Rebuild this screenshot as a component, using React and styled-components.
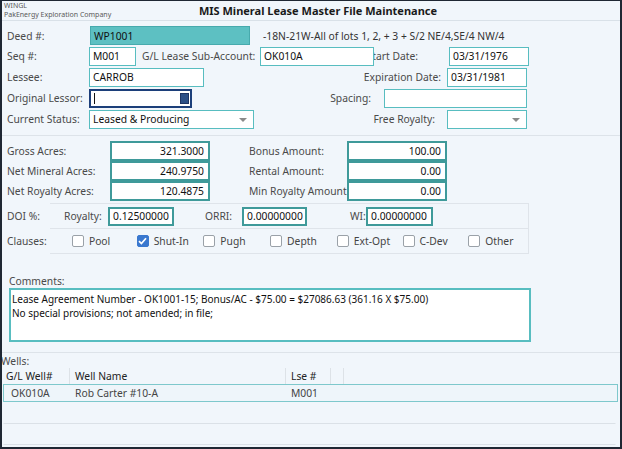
import React from "react"
import styled, { createGlobalStyle } from "styled-components"

const GlobalStyle = createGlobalStyle`
  html, body {
    margin: 0;
    padding: 0;
    background: #f1f6fb;
  }
  * {
    box-sizing: border-box;
  }
`

const TEAL = "#58bdc0"
const TEAL_DARK = "#3f9a9a"
const LABEL = "#4a4a4a"

const Window = styled.div`
  width: 622px;
  height: 449px;
  border: 2px solid #1f2733;
  border-top-width: 1px;
  background: #f1f6fb;
  font-family: "Noto Sans", "Open Sans", sans-serif;
  font-size: 10.3px;
  line-height: 14px;
  color: #1a1a1a;
  overflow: hidden;
  display: flex;
  flex-direction: column;
`

const Header = styled.div`
  height: 20px;
  flex-shrink: 0;
  position: relative;
  display: flex;
  align-items: center;
  justify-content: center;
  border-bottom: 1px solid #d9e1e8;
`

const Company = styled.div`
  position: absolute;
  left: 2px;
  top: 0;
  font-size: 7px;
  line-height: 9px;
  color: #5a5a5a;
`

const Title = styled.div`
  font-weight: 700;
  font-size: 11px;
  margin-left: 14px;
`

const Section = styled.div`
  flex-shrink: 0;
  padding: ${(p) => p.$pad || "0 0 0 5px"};
  border-bottom: ${(p) => (p.$line ? "1px solid #dde3e9" : "none")};
  display: flex;
  flex-direction: column;
  gap: ${(p) => p.$gap || 0}px;
`

const Row = styled.div`
  display: flex;
  align-items: center;
  height: ${(p) => p.$h || 20}px;
`

const Label = styled.span`
  color: ${LABEL};
  width: ${(p) => (p.$w ? `${p.$w}px` : "auto")};
  margin-left: ${(p) => p.$ml || 0}px;
  line-height: ${(p) => p.$lh || 14}px;
  white-space: nowrap;
  flex-shrink: 0;
`

const ClipLabel = styled.span`
  color: ${LABEL};
  width: ${(p) => p.$w}px;
  overflow: hidden;
  display: flex;
  justify-content: flex-end;
  white-space: nowrap;
  flex-shrink: 0;
`

const RightLabel = styled.span`
  color: ${LABEL};
  width: ${(p) => p.$w}px;
  text-align: right;
  white-space: nowrap;
  flex-shrink: 0;
  padding-right: ${(p) => p.$pr || 0}px;
`

const Field = styled.div`
  width: ${(p) => p.$w}px;
  height: ${(p) => p.$h || 19}px;
  margin-left: ${(p) => p.$ml || 0}px;
  margin-right: ${(p) => p.$mr || 0}px;
  border: ${(p) => (p.$thick || p.$navy ? 2 : 1)}px solid
    ${(p) => (p.$navy ? "#1c3f7a" : p.$thick ? TEAL_DARK : p.$fill ? "#47aaad" : TEAL)};
  background: ${(p) => (p.$fill ? "#5dc0c2" : "#fff")};
  display: flex;
  align-items: center;
  justify-content: ${(p) => (p.$right ? "flex-end" : "flex-start")};
  padding: 0 4px 0 3px;
  color: #111;
  white-space: nowrap;
  flex-shrink: 0;
  position: relative;
`

const Caret = styled.span`
  position: absolute;
  right: 6px;
  top: 7px;
  width: 0;
  height: 0;
  border-left: 4px solid transparent;
  border-right: 4px solid transparent;
  border-top: 4px solid #8a8a8a;
`

const TextCursor = styled.span`
  width: 1px;
  height: 11px;
  background: #111;
`

const LookupBtn = styled.span`
  position: absolute;
  right: 1px;
  top: 2px;
  width: 9px;
  height: 11px;
  background: #2b4f86;
  border: 1px solid #1c3463;
`

const Spacer = styled.div`
  flex: 1;
`

const LegalText = styled.span`
  color: #333;
  margin-left: 13px;
  white-space: nowrap;
`

const Panel = styled.div`
  margin-left: 43px;
  width: 479px;
  border-top: 1px solid #dfe4ea;
  border-right: 1px solid #dfe4ea;
  border-bottom: 1px solid #dfe4ea;
`

const PanelRow = styled.div`
  position: relative;
  display: flex;
  align-items: center;
  height: ${(p) => p.$h}px;
  border-bottom: ${(p) => (p.$line ? "1px solid #dfe4ea" : "none")};
`

const SideLabel = styled.span`
  color: ${LABEL};
  position: absolute;
  left: -43px;
`

const Check = styled.span`
  width: 12px;
  height: 12px;
  border-radius: 2px;
  border: 1px solid ${(p) => (p.$on ? "#3a78cf" : "#9aa1a8")};
  background: ${(p) => (p.$on ? "#3a78cf" : "#fff")};
  display: inline-flex;
  align-items: center;
  justify-content: center;
  margin-right: 5px;
`

const CheckItem = styled.span`
  display: flex;
  align-items: center;
  width: ${(p) => p.$w}px;
  color: #444;
`

const TextArea = styled.div`
  width: 522px;
  height: 54px;
  border: 2px solid ${TEAL};
  background: #fff;
  padding: 2px 1px;
  line-height: 14px;
  font-size: 10px;
  color: #111;
`

const Table = styled.div`
  margin: 0 2px 0 1px;
  flex: 1;
  display: flex;
  flex-direction: column;
`

const HeadRow = styled.div`
  display: flex;
  height: 16px;
  align-items: center;
`

const HeadCell = styled.div`
  width: ${(p) => p.$w}px;
  padding-left: ${(p) => p.$pl || 3}px;
  border-right: ${(p) => (p.$sep ? "1px solid #dde2e7" : "none")};
  height: 100%;
  display: flex;
  align-items: center;
  color: #222;
  flex-shrink: 0;
`

const DataRow = styled.div`
  display: flex;
  flex-shrink: 0;
  height: ${(p) => p.$h || 18}px;
  align-items: center;
  border: 1px solid ${(p) => (p.$sel ? "#7ec8cc" : "transparent")};
  border-bottom: 1px solid ${(p) => (p.$sel ? "#7ec8cc" : "#dbe1e7")};
  background: ${(p) => (p.$sel ? "#eef5fa" : "transparent")};
  margin-right: ${(p) => (p.$sel ? 0 : 2)}px;
`

const Cell = styled.div`
  width: ${(p) => p.$w}px;
  padding-left: ${(p) => p.$pl || 0}px;
  color: #444;
  flex-shrink: 0;
`

const checks = [
  ["Pool", false, 65],
  ["Shut-In", true, 67],
  ["Pugh", false, 67],
  ["Depth", false, 67],
  ["Ext-Opt", false, 66],
  ["C-Dev", false, 66],
  ["Other", false, 60],
]

const acres = [
  ["Gross Acres:", "321.3000", "Bonus Amount:", "100.00"],
  ["Net Mineral Acres:", "240.9750", "Rental Amount:", "0.00"],
  ["Net Royalty Acres:", "120.4875", "Min Royalty Amount:", "0.00"],
]

export default function App() {
  return (
    <>
      <GlobalStyle />
      <Window>
        <Header>
          <Company>
            WINGL
            <br />
            PakEnergy Exploration Company
          </Company>
          <Title>MIS Mineral Lease Master File Maintenance</Title>
        </Header>

        <Section $line $pad="5px 0 6px 5px" $gap={1}>
          <Row $h={19}>
            <Label $w={83}>Deed #:</Label>
            <Field $w={160} $fill>WP1001</Field>
            <LegalText>-18N-21W-All of lots 1, 2, + 3 + S/2 NE/4,SE/4 NW/4</LegalText>
          </Row>
          <Row>
            <Label $w={82}>Seq #:</Label>
            <Field $w={47}>M001</Field>
            <Label $ml={6} $w={118}>G/L Lease Sub-Account:</Label>
            <Field $w={114}>OK010A</Field>
            <ClipLabel $w={44}>Start Date:</ClipLabel>
            <Field $w={80} $ml={31}>03/31/1976</Field>
          </Row>
          <Row>
            <Label $w={82}>Lessee:</Label>
            <Field $w={115}>CARROB</Field>
            <Spacer />
            <RightLabel $w={100} $pr={6}>Expiration Date:</RightLabel>
            <Field $w={80} $mr={93}>03/31/1981</Field>
          </Row>
          <Row>
            <Label $w={82}>Original Lessor:</Label>
            <Field $w={103} $navy>
              <TextCursor />
              <LookupBtn />
            </Field>
            <Spacer />
            <RightLabel $w={60} $pr={13}>Spacing:</RightLabel>
            <Field $w={143} $mr={93} />
          </Row>
          <Row>
            <Label $w={82}>Current Status:</Label>
            <Field $w={165}>
              Leased &amp; Producing
              <Caret />
            </Field>
            <Spacer />
            <RightLabel $w={100} $pr={12}>Free Royalty:</RightLabel>
            <Field $w={80} $mr={93}>
              <Caret />
            </Field>
          </Row>
        </Section>

        <Section $pad="5px 0 0 5px">
          {acres.map(([a, av, b, bv]) => (
            <Row key={a}>
              <Label $w={103}>{a}</Label>
              <Field $w={100} $h={20} $thick $right>
                {av}
              </Field>
              <Label $ml={39} $w={98}>{b}</Label>
              <Field $w={100} $h={20} $thick $right>
                {bv}
              </Field>
            </Row>
          ))}
          <div style={{ marginTop: 2 }}>
            <Panel>
              <PanelRow $h={25} $line>
                <SideLabel>DOI %:</SideLabel>
                <Label $ml={14} $w={44}>Royalty:</Label>
                <Field $w={66} $thick>0.12500000</Field>
                <Label $ml={31} $w={37}>ORRI:</Label>
                <Field $w={65} $thick>0.00000000</Field>
                <Label $ml={43} $w={16}>WI:</Label>
                <Field $w={67} $thick>0.00000000</Field>
              </PanelRow>
              <PanelRow $h={24}>
                <SideLabel>Clauses:</SideLabel>
                <span style={{ width: 22 }} />
                {checks.map(([t, on, w]) => (
                  <CheckItem key={t} $w={w}>
                    <Check $on={on}>
                      {on && (
                        <svg width="9" height="8" viewBox="0 0 9 8">
                          <path d="M1 4.2 L3.4 6.5 L8 1.3" stroke="#fff" strokeWidth="1.7" fill="none" />
                        </svg>
                      )}
                    </Check>
                    {t}
                  </CheckItem>
                ))}
              </PanelRow>
            </Panel>
          </div>
        </Section>

        <Section $line $pad="21px 0 10px 7px">
          <Label $lh={13}>Comments:</Label>
          <TextArea>
            Lease Agreement Number - OK1001-15; Bonus/AC - $75.00 = $27086.63 (361.16 X $75.00)
            <br />
            No special provisions; not amended; in file;
          </TextArea>
        </Section>

        <Section $pad="2px 0 0 0">
          <Label $lh={13} style={{ marginLeft: -1 }}>Wells:</Label>
        </Section>
        <Table>
          <HeadRow>
            <HeadCell $w={67} $sep>G/L Well#</HeadCell>
            <HeadCell $w={216} $sep $pl={5}>Well Name</HeadCell>
            <HeadCell $w={45} $sep $pl={5}>Lse #</HeadCell>
            <HeadCell $w={13} $sep />
          </HeadRow>
          <DataRow $sel>
            <Cell $w={68} $pl={7}>OK010A</Cell>
            <Cell $w={216} $pl={3}>Rob Carter #10-A</Cell>
            <Cell $w={50} $pl={3}>M001</Cell>
          </DataRow>
          <DataRow $h={22} />
          <DataRow $h={21} />
        </Table>
      </Window>
    </>
  )
}
